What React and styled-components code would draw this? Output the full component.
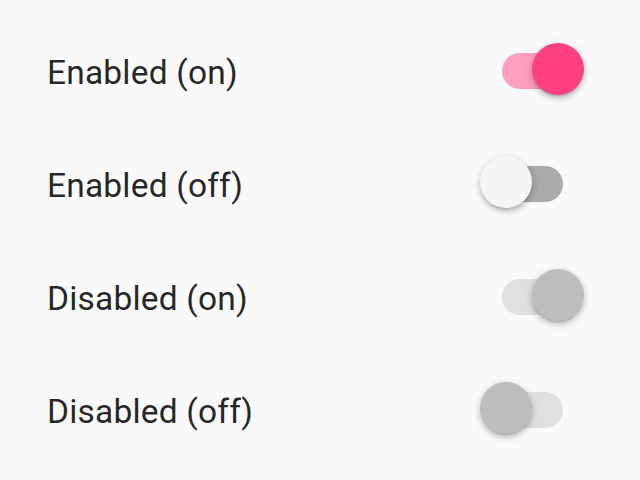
import React from "react";
import styled, { createGlobalStyle } from "styled-components";

const GlobalStyle = createGlobalStyle`
  html, body {
    margin: 0;
    padding: 0;
    background: #fafafa;
  }
  body {
    font-family: Roboto, "Liberation Sans", sans-serif;
  }
`;

const Page = styled.div`
  width: 640px;
  height: 480px;
  box-sizing: border-box;
  padding: 16px 56px 0 47px;
  background: #fafafa;
`;

const Row = styled.div`
  display: flex;
  align-items: center;
  justify-content: space-between;
  height: 113px;
`;

const Label = styled.span`
  font-size: 33.5px;
  color: rgba(0, 0, 0, 0.87);
  letter-spacing: 0.2px;
`;

const SwitchBox = styled.div`
  position: relative;
  width: 104px;
  height: 52px;
  margin-top: -4px;
  flex-shrink: 0;
`;

const Track = styled.div`
  position: absolute;
  left: 22px;
  top: 8px;
  width: 61px;
  height: 36px;
  border-radius: 18px;
  background: ${(p) =>
    p.disabled ? "#e0e0e0" : p.on ? "#ff9fc0" : "#aaaaaa"};
`;

const Thumb = styled.div`
  position: absolute;
  top: -2px;
  left: ${(p) => (p.on ? "52px" : "0")};
  width: 52px;
  height: 52px;
  border-radius: 50%;
  background: ${(p) =>
    p.disabled ? "#bdbdbd" : p.on ? "#ff4081" : "#f5f5f5"};
  box-shadow: 0 3px 3px -2px rgba(0, 0, 0, 0.2),
    0 4px 6px 0 rgba(0, 0, 0, 0.16), 0 1px 8px 0 rgba(0, 0, 0, 0.12);
`;

const Switch = ({ on, disabled }) => (
  <SwitchBox>
    <Track on={on ? 1 : 0} disabled={disabled} />
    <Thumb on={on ? 1 : 0} disabled={disabled} />
  </SwitchBox>
);

const rows = [
  { label: "Enabled (on)", on: true, disabled: false },
  { label: "Enabled (off)", on: false, disabled: false },
  { label: "Disabled (on)", on: true, disabled: true },
  { label: "Disabled (off)", on: false, disabled: true },
];

const App = () => (
  <>
    <GlobalStyle />
    <Page>
      {rows.map((r) => (
        <Row key={r.label}>
          <Label>{r.label}</Label>
          <Switch on={r.on} disabled={r.disabled} />
        </Row>
      ))}
    </Page>
  </>
);

export default App;
